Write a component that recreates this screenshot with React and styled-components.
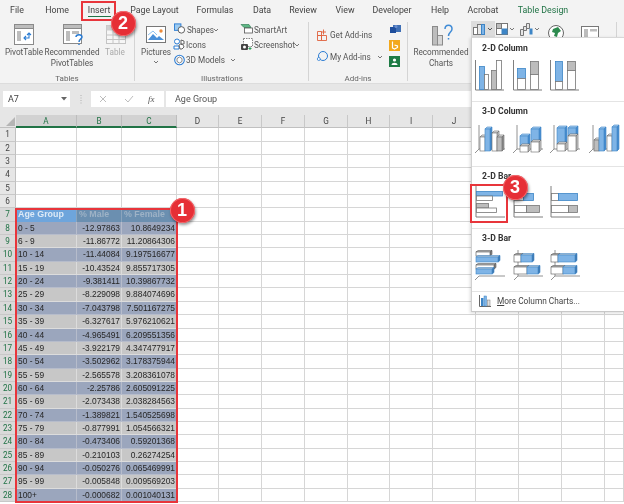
import React from "react";
import styled, { createGlobalStyle } from "styled-components";

const Global = createGlobalStyle`
  html, body { margin: 0; padding: 0; background: #fff; }
  #root { width: 624px; height: 504px; overflow: hidden; }
`;

const Page = styled.div`
  position: relative; width: 624px; height: 504px; overflow: hidden; background: #fff;
  font-family: Roboto, "Open Sans", sans-serif; color: #444; filter: blur(0.32px);
`;
const Ribbon = styled.div`
  position: absolute; left: 0; top: 0; width: 624px; height: 83px; background: #f3f3f3;
  border-bottom: 1px solid #dcdcdc;
`;
const Tab = styled.span`
  position: absolute; left: ${p => p.$x}px; top: 9.5px; transform: translate(-50%, -50%);
  font-size: 8.8px; white-space: nowrap; color: ${p => p.$green ? "#217346" : "#444"};
`;
const Underline = styled.div`
  position: absolute; left: 88px; top: 15.5px; width: 23px; height: 1.5px; background: #217346;
`;
const RibbonText = styled.span`
  position: absolute; left: ${p => p.$x}px; top: ${p => p.$y}px;
  transform: translate(${p => p.$center ? "-50%" : "0"}, -50%);
  font-size: 8.2px; white-space: nowrap; color: ${p => p.$muted ? "#aaa" : "#555"};
`;
const GroupLabel = styled(RibbonText)`
  font-size: 8px; color: #666; transform: translate(-50%, -50%);
`;
const FxLabel = styled(RibbonText)`
  font-family: "Liberation Serif", serif; font-style: italic; font-size: 9px; color: #555;
`;
const Divider = styled.div`
  position: absolute; left: ${p => p.$x}px; top: 22px; width: 1px; height: 59px; background: #d4d4d4;
`;
const Glyph = styled.svg`
  position: absolute; left: ${p => p.$x}px; top: ${p => p.$y}px; overflow: visible;
`;
const FormulaBar = styled.div`
  position: absolute; left: 0; top: 84px; width: 624px; height: 31px; background: #e6e6e6;
`;
const NameBox = styled.div`
  position: absolute; left: 3px; top: 7px; width: 67px; height: 16px; background: #fff;
  font-size: 9px; line-height: 16px; text-indent: 5px; color: #444;
`;
const FxBox = styled.div`
  position: absolute; left: 91px; top: 7px; width: 73px; height: 16px; background: #fff;
`;
const Input = styled.div`
  position: absolute; left: 166px; top: 7px; width: 458px; height: 16px; background: #fff;
  font-size: 9px; line-height: 16px; text-indent: 9px; color: #555;
`;
const Sheet = styled.div`
  position: absolute; left: 0; top: 115px; display: grid;
  grid-template-columns: 16px 61px 45px 55px 42px 43px 43px 43px 42px 43px 43px 43px 43px 43px 19px;
  grid-auto-rows: 13.35px;
  font-family: "Liberation Sans", Arial, sans-serif;
`;
const ColHead = styled.div`
  background: ${p => p.$on ? "#d2d2d2" : "#e6e6e6"};
  border-right: 1px solid ${p => p.$on ? "#bdbdbd" : "#c8c8c8"};
  box-sizing: border-box; text-align: center;
  border-bottom: ${p => p.$on ? "2px solid #217346" : "1px solid #c0c0c0"};
  font: 8.2px/12.5px Roboto, sans-serif; color: ${p => p.$on ? "#217346" : "#444"};
`;
const RowHead = styled.div`
  background: ${p => p.$on ? "#d9d9d9" : "#e6e6e6"}; box-sizing: border-box;
  border-bottom: 1px solid #c8c8c8; border-right: 1px solid #c0c0c0;
  font: 8.2px/12.5px Roboto, sans-serif; text-align: center;
  color: ${p => p.$on ? "#217346" : "#444"};
`;
const Corner = styled.div`
  background: #e6e6e6; position: relative; box-sizing: border-box; border-bottom: 1px solid #c0c0c0;
  &::after { content: ""; position: absolute; right: 1px; bottom: 1px; border-style: solid;
    border-width: 0 0 9px 9px; border-color: transparent transparent #b5b5b5 transparent; }
`;
const Cell = styled.div`
  box-sizing: border-box; border-right: 1px solid #d6d6d6; border-bottom: 1px solid #d6d6d6;
`;
const Data = styled.div`
  box-sizing: border-box; font-size: 8.4px; line-height: 13.2px; white-space: nowrap; overflow: hidden;
  padding: 0 1px 0 2px; text-align: ${p => p.$right ? "right" : "left"}; color: #262626;
  background: ${p => p.$band ? "#9ba6bd" : "#c7c7c7"};
  border-right: 1px solid ${p => p.$band ? "#b6bccb" : "#dcdcdc"};
  border-bottom: 1px solid ${p => p.$band ? "#b6bccb" : "#dcdcdc"};
`;
const HeadCell = styled.div`
  box-sizing: border-box; font-size: 8.9px; font-weight: 700; line-height: 13.2px; white-space: nowrap;
  padding-left: 2px;
  background: ${p => p.$active ? "#6ea5dc" : "#6b8fb0"};
  color: ${p => p.$active ? "#dce9f6" : "#9db2c6"};
  border-right: 1px solid #8aa4bd;
`;
const RedBox = styled.div`
  position: absolute; left: ${p => p.$x}px; top: ${p => p.$y}px; width: ${p => p.$w}px; height: ${p => p.$h}px;
  box-sizing: border-box; border: 2px solid #e8353b;
`;
const Badge = styled.div`
  position: absolute; left: ${p => p.$x - 12.5}px; top: ${p => p.$y - 12.5}px; width: 25px; height: 25px;
  border-radius: 50%; background: #e62f36; color: #fff; text-align: center;
  font: 700 18px/25px "Liberation Sans", sans-serif;
  box-shadow: 1px 2px 3px rgba(0,0,0,.4), inset 0 0 0 1px #f26a6e;
`;
const Menu = styled.div`
  position: absolute; left: 471px; top: 37px; width: 153px; height: 275px; background: #fff;
  border-left: 1px solid #d0d0d0; border-top: 1px solid #d8d8d8; border-bottom: 1px solid #c8c8c8;
  box-shadow: -1px 1px 3px rgba(0,0,0,.15); box-sizing: border-box;
`;
const MenuHead = styled.div`
  position: absolute; left: 10px; top: ${p => p.$y - 37 - 7}px; font-size: 8.6px; font-weight: 700; line-height: 14px; color: #333;
`;
const MenuRule = styled.div`
  position: absolute; left: 0; right: 0; top: ${p => p.$y - 37}px; height: 1px; background: #e4e4e4;
`;
const MoreLink = styled.span`
  position: absolute; left: 25px; top: 257px; font-size: 8.3px; line-height: 13px; color: #444;
  white-space: nowrap;
  u { text-decoration: underline; }
`;

const AX = "#7f7f7f", BL = "#7fb4e6", BLD = "#3d85c6", GR = "#bdbdbd";

const Thumb = ({ x, y, children, w = 30, h = 32 }) => (
  <Glyph $x={x} $y={y} width={w} height={h} viewBox={`0 0 ${w} ${h}`}>{children}</Glyph>
);
const R = ({ x, y, w, h, f = "#fff" }) => (
  <rect x={x + .5} y={y + .5} width={w} height={h} fill={f} stroke={f === BL ? BLD : "#777"} strokeWidth=".8" />
);
const AxisV = ({ h = 30 }) => (
  <path d={`M.5 0V${h}H29`} fill="none" stroke={AX} strokeWidth="1" />
);
const AxisH = () => <path d="M1 0V31H30" fill="none" stroke={AX} strokeWidth="1" />;

const Box3 = ({ x, y, w, h, f = "#fff" }) => {
  const side = f === BL ? "#4a8fd0" : f === GR ? "#999" : "#cfcfcf";
  const top = f === BL ? "#a5ccf0" : "#e8e8e8";
  return (
    <g stroke={f === BL ? BLD : "#666"} strokeWidth=".6">
      <path d={`M${x} ${y}l2-2h${w}l-2 2z`} fill={top} />
      <path d={`M${x + w} ${y}l2-2v${h}l-2 2z`} fill={side} />
      <rect x={x} y={y} width={w} height={h} fill={f} />
    </g>
  );
};
const Axis3 = () => <path d="M4 2V26L0 30M4 26H30" fill="none" stroke="#777" strokeWidth=".8" />;
const HBox = ({ x, y, w, h = 5, f = "#fff" }) => {
  const side = f === BL ? "#3f78b0" : "#888";
  return (
    <g stroke={f === BL ? BLD : "#555"} strokeWidth=".6">
      <path d={`M${x} ${y}l2-1.5h${w}l-2 1.5z`} fill="#ddd" />
      <path d={`M${x + w} ${y}l2-1.5v${h}l-2 1.5z`} fill={side} />
      <rect x={x} y={y} width={w} height={h} fill={f} />
    </g>
  );
};

const Chevron = ({ x, y }) => (
  <Glyph $x={x} $y={y} width="6" height="4" viewBox="0 0 6 4"><path d="M1 1l2 2 2-2" fill="none" stroke="#666" strokeWidth=".9" /></Glyph>
);

const RibbonIcons = () => (
  <>
    <Glyph $x={14} $y={24} width="20" height="21" viewBox="0 0 20 21">
      <rect x=".5" y=".5" width="19" height="20" fill="#fff" stroke="#8a8a8a" />
      <rect x=".5" y=".5" width="19" height="4" fill="#bdbdbd" stroke="#8a8a8a" />
      <rect x="3" y="7" width="4" height="10" fill="#bdbdbd" />
      <path d="M10 14h5V9M13 11l2-2 2 2M12 12l-2 2 2 2" fill="none" stroke="#2b7cd3" strokeWidth="1.1" />
    </Glyph>
    <Glyph $x={63} $y={24} width="22" height="21" viewBox="0 0 22 21">
      <rect x=".5" y=".5" width="18" height="19" fill="#fff" stroke="#8a8a8a" />
      <rect x=".5" y=".5" width="18" height="4" fill="#bdbdbd" stroke="#8a8a8a" />
      <rect x="3" y="7" width="4" height="10" fill="#bdbdbd" />
      <rect x="9" y="7" width="7" height="3" fill="#bdbdbd" />
      <path d="M13 13c0-3 6-3 6 0 0 2-3 2-3 5M16 20v1" fill="none" stroke="#2b7cd3" strokeWidth="1.5" />
    </Glyph>
    <Glyph $x={106} $y={25} width="20" height="19" viewBox="0 0 20 19">
      <rect x=".5" y=".5" width="19" height="18" fill="#f6f6f6" stroke="#c4c4c4" />
      <rect x=".5" y=".5" width="19" height="5" fill="#d0d0d0" />
      <path d="M7 0v19M13 0v19M0 10h20M0 14.500h20" stroke="#c4c4c4" fill="none" />
    </Glyph>
    <Glyph $x={146} $y={26} width="20" height="17" viewBox="0 0 20 17">
      <rect x=".5" y=".5" width="19" height="16" fill="#fff" stroke="#777" />
      <path d="M2 14l5-6 4 4 2-2 5 4z" fill="#4a90d9" />
      <path d="M2 9l5-4 4 4" fill="none" stroke="#8fc1ee" />
      <circle cx="15" cy="5" r="1.700" fill="#ee8b3a" />
    </Glyph>
    <Glyph $x={174} $y={23} width="12" height="11" viewBox="0 0 13 11">
      <rect x=".5" y=".5" width="7" height="7" fill="#9ccaf0" stroke="#2b7cd3" />
      <circle cx="8" cy="7" r="3.500" fill="#fff" stroke="#555" />
    </Glyph>
    <Glyph $x={173} $y={38} width="13" height="12" viewBox="0 0 13 12">
      <circle cx="4" cy="3.500" r="2.500" fill="#fff" stroke="#2b7cd3" />
      <path d="M1 8h5v3H1z" fill="#fff" stroke="#2b7cd3" />
      <path d="M8 2l3 1v3H8zM6 7a3 3 0 0 1 5 2l-2 2H7z" fill="#fff" stroke="#555" strokeWidth=".9" />
    </Glyph>
    <Glyph $x={174} $y={54} width="11" height="12" viewBox="0 0 11 12">
      <circle cx="5.500" cy="6" r="4.800" fill="#fff" stroke="#2b7cd3" strokeWidth="1.100" />
      <path d="M5.500 3l2.500 1.500v3L5.500 9 3 7.500v-3z" fill="#fff" stroke="#555" strokeWidth=".7" />
    </Glyph>
    <Glyph $x={241} $y={24} width="12" height="10" viewBox="0 0 12 10">
      <path d="M0 .5h8l2 3H3z" fill="#5fb785" stroke="#217346" strokeWidth=".6" />
      <rect x="3.500" y="4" width="8" height="5" fill="#fff" stroke="#555" strokeWidth=".8" />
    </Glyph>
    <Glyph $x={241} $y={38} width="12" height="13" viewBox="0 0 12 13">
      <rect x="2.500" y=".5" width="9" height="8" fill="#fff" stroke="#666" strokeWidth=".8" strokeDasharray="1.500 1" />
      <rect x="0" y="6" width="7" height="6" rx="1" fill="#444" />
      <circle cx="3.500" cy="9" r="1.500" fill="#fff" />
      <path d="M9 9v3M7.500 10.500h3" stroke="#2e9e5b" />
    </Glyph>
    <Glyph $x={317} $y={29} width="11" height="12" viewBox="0 0 11 12">
      <path d="M.5 2.500h4v4h-4zM.5 6.500h4v5h-4zM4.500 6.500h5v5h-5zM6.500.5v5M4 3h5" fill="none" stroke="#e0613c" strokeWidth=".9" />
    </Glyph>
    <Glyph $x={317} $y={50} width="11" height="12" viewBox="0 0 11 12">
      <circle cx="6" cy="6" r="4.500" fill="none" stroke="#2b7cd3" />
      <circle cx="1.800" cy="9" r="1.500" fill="#fff" stroke="#2b7cd3" strokeWidth=".8" />
    </Glyph>
    <Glyph $x={390} $y={25} width="11" height="9" viewBox="0 0 11 9">
      <rect x="3" y="0" width="8" height="7" fill="#3f6fb5" />
      <rect x="0" y="2" width="6" height="6" fill="#1f4e9c" />
      <circle cx="6" cy="1.500" r="1.500" fill="#6b8fd0" />
    </Glyph>
    <Glyph $x={389} $y={40} width="11" height="11" viewBox="0 0 11 11">
      <rect width="11" height="11" fill="#f3a81c" />
      <path d="M3.500 1.500v6.500l2 1 3-1.500v-1.500l-3-1" fill="none" stroke="#fff" strokeWidth="1.200" />
    </Glyph>
    <Glyph $x={389} $y={56} width="11" height="11" viewBox="0 0 11 11">
      <rect width="11" height="11" fill="#1e7b45" />
      <circle cx="5.500" cy="4" r="1.600" fill="#fff" />
      <path d="M2.500 9c0-3 6-3 6 0z" fill="#fff" />
    </Glyph>
    <Glyph $x={432} $y={24} width="22" height="22" viewBox="0 0 22 22">
      <rect x=".5" y="2.500" width="5" height="18.500" fill="#bdbdbd" stroke="#8a8a8a" />
      <rect x="5.500" y="11.500" width="5" height="9.500" fill="#d6d6d6" stroke="#8a8a8a" />
      <path d="M13 5c0-5 7-5 7 0 0 3-3.500 3-3.500 7M16.500 14v1.500" fill="none" stroke="#3f8bd6" strokeWidth="1.500" />
    </Glyph>
    <Glyph $x={471} $y={21} width="24" height="17" viewBox="0 0 24 17">
      <rect x="0" y="0" width="24" height="16" fill="#dcdcdc" />
      <rect x="2.500" y="6.500" width="4" height="7" fill="#fff" stroke="#777" />
      <rect x="6.500" y="3.500" width="4" height="10" fill="#e8e8e8" stroke="#777" />
      <rect x="10.500" y="3.500" width="3" height="10" fill="#7fb4e6" stroke="#3d85c6" />
      <path d="M17 7l2 2 2-2" fill="none" stroke="#555" />
    </Glyph>
    <Glyph $x={496} $y={23} width="20" height="13" viewBox="0 0 20 13">
      <rect x=".5" y=".5" width="11" height="11" fill="#fff" stroke="#777" />
      <rect x="5.500" y="5.500" width="6" height="6" fill="#3d85c6" />
      <rect x=".5" y=".5" width="5" height="5" fill="#bdbdbd" stroke="#777" />
      <path d="M14 5l2 2 2-2" fill="none" stroke="#777" />
    </Glyph>
    <Glyph $x={520} $y={23} width="21" height="13" viewBox="0 0 21 13">
      <path d="M.5 6.500h3v6h-3zM3.500 3.500h3v4h-3zM6.500.5h3v5h-3z" fill="#e6e6e6" stroke="#777" />
      <rect x="9.500" y="5.500" width="3" height="6" fill="#3d85c6" />
      <path d="M15 5l2 2 2-2" fill="none" stroke="#777" />
    </Glyph>
    <Glyph $x={548} $y={25} width="16" height="13" viewBox="0 0 16 13">
      <circle cx="8" cy="8" r="7.500" fill="#fff" stroke="#666" />
      <path d="M5 4l5-2 3 4-3 2-1 4-3-1 1-3-3-1z" fill="#2e8b4f" />
    </Glyph>
    <Glyph $x={581} $y={26} width="19" height="12" viewBox="0 0 19 12">
      <rect x=".5" y=".5" width="17" height="13" fill="#fff" stroke="#777" />
      <rect x="3" y="3" width="4" height="8" fill="#bdbdbd" />
      <rect x="9" y="3" width="7" height="2.500" fill="#bdbdbd" />
    </Glyph>
  </>
);

const Thumbs = () => (
  <>
    <Thumb x={475} y={60}><AxisV /><R x={4} y={6} w={5} h={23} f={BL} /><R x={9} y={14} w={4} h={15} /><R x={16} y={10} w={5} h={19} f={GR} /><R x={21} y={0} w={5} h={29} /></Thumb>
    <Thumb x={513} y={60}><AxisV /><R x={4} y={8} w={8} h={10} f={BL} /><R x={4} y={18} w={8} h={11} /><R x={17} y={1} w={8} h={13} f={GR} /><R x={17} y={14} w={8} h={15} /></Thumb>
    <Thumb x={550} y={60}><AxisV /><R x={5} y={1} w={7} h={20} f={BL} /><R x={5} y={21} w={7} h={8} /><R x={17} y={1} w={8} h={9} f={GR} /><R x={17} y={10} w={8} h={19} /></Thumb>

    <Thumb x={475} y={123}><Axis3 /><Box3 x={5} y={14} w={5} h={14} /><Box3 x={10} y={6} w={5} h={22} f={BL} /><Box3 x={17} y={10} w={5} h={18} /><Box3 x={22} y={14} w={5} h={14} f={GR} /></Thumb>
    <Thumb x={513} y={123}><Axis3 /><Box3 x={7} y={13} w={8} h={10} f={BL} /><Box3 x={7} y={23} w={8} h={6} /><Box3 x={18} y={6} w={8} h={13} f={BL} /><Box3 x={18} y={19} w={8} h={10} /></Thumb>
    <Thumb x={550} y={123}><Axis3 /><Box3 x={7} y={5} w={8} h={16} f={BL} /><Box3 x={7} y={21} w={8} h={7} /><Box3 x={18} y={5} w={8} h={8} f={BL} /><Box3 x={18} y={13} w={8} h={15} /></Thumb>
    <Thumb x={589} y={123} w={32}><Axis3 /><Box3 x={5} y={17} w={5} h={11} f={GR} /><Box3 x={10} y={6} w={5} h={22} f={BL} /><Box3 x={18} y={13} w={5} h={15} /><Box3 x={23} y={4} w={5} h={24} f={BL} /></Thumb>

    <Thumb x={475} y={186}><AxisH /><R x={1} y={5} w={26} h={4.5} f={BL} /><R x={1} y={9.5} w={16} h={4.5} /><R x={1} y={17} w={12} h={4.5} f={GR} /><R x={1} y={21.5} w={20} h={4.5} /></Thumb>
    <Thumb x={513} y={186}><AxisH /><R x={1} y={7} w={9} h={7} /><R x={10} y={7} w={10} h={7} f={BL} /><R x={1} y={19} w={12} h={7} /><R x={13} y={19} w={13} h={7} f={GR} /></Thumb>
    <Thumb x={550} y={186}><AxisH /><R x={1} y={7} w={7} h={7} /><R x={8} y={7} w={19} h={7} f={BL} /><R x={1} y={19} w={17} h={7} /><R x={18} y={19} w={9} h={7} f={GR} /></Thumb>

    <Thumb x={475} y={250}><path d="M0 30l4-4H30" fill="none" stroke="#777" strokeWidth=".8" /><HBox x={1} y={2} w={14} h={4} /><HBox x={1} y={7} w={22} h={5} f={BL} /><HBox x={1} y={15} w={18} h={4} /><HBox x={1} y={19} w={16} h={5} f={BL} /></Thumb>
    <Thumb x={513} y={250}><path d="M5 0V26L1 30M5 26H30" fill="none" stroke="#777" strokeWidth=".8" /><HBox x={1} y={5} w={7} h={7} /><HBox x={8} y={5} w={11} h={7} f={BL} /><HBox x={1} y={17} w={13} h={7} /><HBox x={14} y={17} w={11} h={7} f={BL} /></Thumb>
    <Thumb x={550} y={250}><path d="M5 0V26L1 30M5 26H30" fill="none" stroke="#777" strokeWidth=".8" /><HBox x={1} y={5} w={7} h={7} /><HBox x={8} y={5} w={17} h={7} f={BL} /><HBox x={1} y={17} w={12} h={7} /><HBox x={13} y={17} w={12} h={7} f={BL} /></Thumb>

    <Glyph $x={479} $y={295} width="12" height="12" viewBox="0 0 12 12">
      <path d="M.5 0V11.500H12" fill="none" stroke="#666" />
      <rect x="2" y="3" width="2.500" height="8" fill="#3d85c6" /><rect x="5" y="1" width="2.500" height="10" fill="#7fb4e6" stroke="#3d85c6" strokeWidth=".5" /><rect x="8.500" y="5" width="2.500" height="6" fill="#ddd" stroke="#777" strokeWidth=".5" />
    </Glyph>
  </>
);

const COLS = ["A", "B", "C", "D", "E", "F", "G", "H", "I", "J", "K", "L", "M"];
const ROWS = [
  ["0 - 5", "-12.97863", "10.8649234"], ["6 - 9", "-11.86772", "11.20864306"], ["10 - 14", "-11.44084", "9.197516677"],
  ["15 - 19", "-10.43524", "9.855717305"], ["20 - 24", "-9.381411", "10.39867732"], ["25 - 29", "-8.229098", "9.884074696"],
  ["30 - 34", "-7.043798", "7.501167275"], ["35 - 39", "-6.327617", "5.976210621"], ["40 - 44", "-4.965491", "6.209551356"],
  ["45 - 49", "-3.922179", "4.347477917"], ["50 - 54", "-3.502962", "3.178375944"], ["55 - 59", "-2.565578", "3.208361078"],
  ["60 - 64", "-2.25786", "2.605091225"], ["65 - 69", "-2.073438", "2.038284563"], ["70 - 74", "-1.389821", "1.540525698"],
  ["75 - 79", "-0.877991", "1.054566321"], ["80 - 84", "-0.473406", "0.59201368"], ["85 - 89", "-0.210103", "0.26274254"],
  ["90 - 94", "-0.050276", "0.065469991"], ["95 - 99", "-0.005848", "0.009569203"], ["100+", "-0.000682", "0.001040131"],
];
const TABS = [["File", 17], ["Home", 57], ["Insert", 99], ["Page Layout", 154.5], ["Formulas", 215], ["Data", 262], ["Review", 303], ["View", 345], ["Developer", 392], ["Help", 440], ["Acrobat", 483], ["Table Design", 543, true]];

export default function App() {
  const blanks = n => Array.from({ length: n }, (_, i) => <Cell key={i} />);
  return (
    <Page>
      <Global />
      <Sheet>
        <Corner />
        {COLS.map((c, i) => <ColHead key={c} $on={i < 3}>{c}</ColHead>)}
        <ColHead />
        {[1, 2, 3, 4, 5, 6].map(r => (
          <React.Fragment key={r}><RowHead>{r}</RowHead>{blanks(14)}</React.Fragment>
        ))}
        <RowHead $on>7</RowHead>
        <HeadCell $active>Age Group</HeadCell>
        <HeadCell>% Male</HeadCell>
        <HeadCell>% Female</HeadCell>
        {blanks(11)}
        {ROWS.map((row, i) => (
          <React.Fragment key={row[0]}>
            <RowHead $on>{i + 8}</RowHead>
            <Data $band={i % 2 === 0}>{row[0]}</Data>
            <Data $band={i % 2 === 0} $right>{row[1]}</Data>
            <Data $band={i % 2 === 0} $right>{row[2]}</Data>
            {blanks(11)}
          </React.Fragment>
        ))}
      </Sheet>

      <FormulaBar>
        <NameBox>A7</NameBox>
        <Glyph $x={61} $y={13} width="6" height="4" viewBox="0 0 6 4"><path d="M0 0h6L3 3.500z" fill="#666" /></Glyph>
        <Glyph $x={80} $y={11} width="2" height="9" viewBox="0 0 2 9"><path d="M1 0v9" stroke="#b0b0b0" strokeDasharray="1 1.500" /></Glyph>
        <FxBox />
        <Glyph $x={99} $y={11} width="8" height="8" viewBox="0 0 8 8"><path d="M1 1l6 6M7 1L1 7" stroke="#bdbdbd" /></Glyph>
        <Glyph $x={124} $y={11} width="10" height="8" viewBox="0 0 10 8"><path d="M1 4l3 3 5-6" fill="none" stroke="#bdbdbd" /></Glyph>
        <FxLabel $x={148} $y={15}>fx</FxLabel>
        <Input>Age Group</Input>
      </FormulaBar>

      <Ribbon>
        {TABS.map(([t, x, g]) => <Tab key={t} $x={x} $green={g}>{t}</Tab>)}
        <Underline />
        <RibbonIcons />
        <RibbonText $x={24} $y={52} $center>PivotTable</RibbonText>
        <RibbonText $x={72} $y={52} $center>Recommended</RibbonText>
        <RibbonText $x={72} $y={63} $center>PivotTables</RibbonText>
        <RibbonText $x={115} $y={52} $center $muted>Table</RibbonText>
        <RibbonText $x={156} $y={52} $center>Pictures</RibbonText>
        <Chevron x={153} y={60} />
        <RibbonText $x={187} $y={29.5}>Shapes</RibbonText>
        <Chevron x={213} y={27.5} />
        <RibbonText $x={186} $y={44.5}>Icons</RibbonText>
        <RibbonText $x={186} $y={60}>3D Models</RibbonText>
        <Chevron x={230} y={58} />
        <RibbonText $x={254} $y={29.5}>SmartArt</RibbonText>
        <RibbonText $x={254} $y={44.5}>Screenshot</RibbonText>
        <Chevron x={294} y={42.5} />
        <RibbonText $x={330} $y={35}>Get Add-ins</RibbonText>
        <RibbonText $x={330} $y={57}>My Add-ins</RibbonText>
        <Chevron x={377} y={54.5} />
        <RibbonText $x={441} $y={52} $center>Recommended</RibbonText>
        <RibbonText $x={441} $y={63} $center>Charts</RibbonText>
        <GroupLabel $x={67} $y={78}>Tables</GroupLabel>
        <GroupLabel $x={222} $y={78}>Illustrations</GroupLabel>
        <GroupLabel $x={358} $y={78}>Add-ins</GroupLabel>
        <Divider $x={134} />
        <Divider $x={308} />
        <Divider $x={407} />
        <Divider $x={616} />
      </Ribbon>

      <Menu>
        <MenuHead $y={47}>2-D Column</MenuHead>
        <MenuRule $y={100} />
        <MenuHead $y={110}>3-D Column</MenuHead>
        <MenuRule $y={165} />
        <MenuHead $y={175}>2-D Bar</MenuHead>
        <MenuRule $y={227} />
        <MenuHead $y={237}>3-D Bar</MenuHead>
        <MenuRule $y={290} />
        <MoreLink><u>M</u>ore Column Charts...</MoreLink>
      </Menu>
      <Thumbs />

      <RedBox $x={81} $y={1} $w={35} $h={20} />
      <RedBox $x={15} $y={208} $w={163} $h={295} />
      <RedBox $x={470} $y={184} $w={38} $h={39} />
      <Badge $x={123} $y={23}>2</Badge>
      <Badge $x={182} $y={210}>1</Badge>
      <Badge $x={515} $y={187}>3</Badge>
    </Page>
  );
}
